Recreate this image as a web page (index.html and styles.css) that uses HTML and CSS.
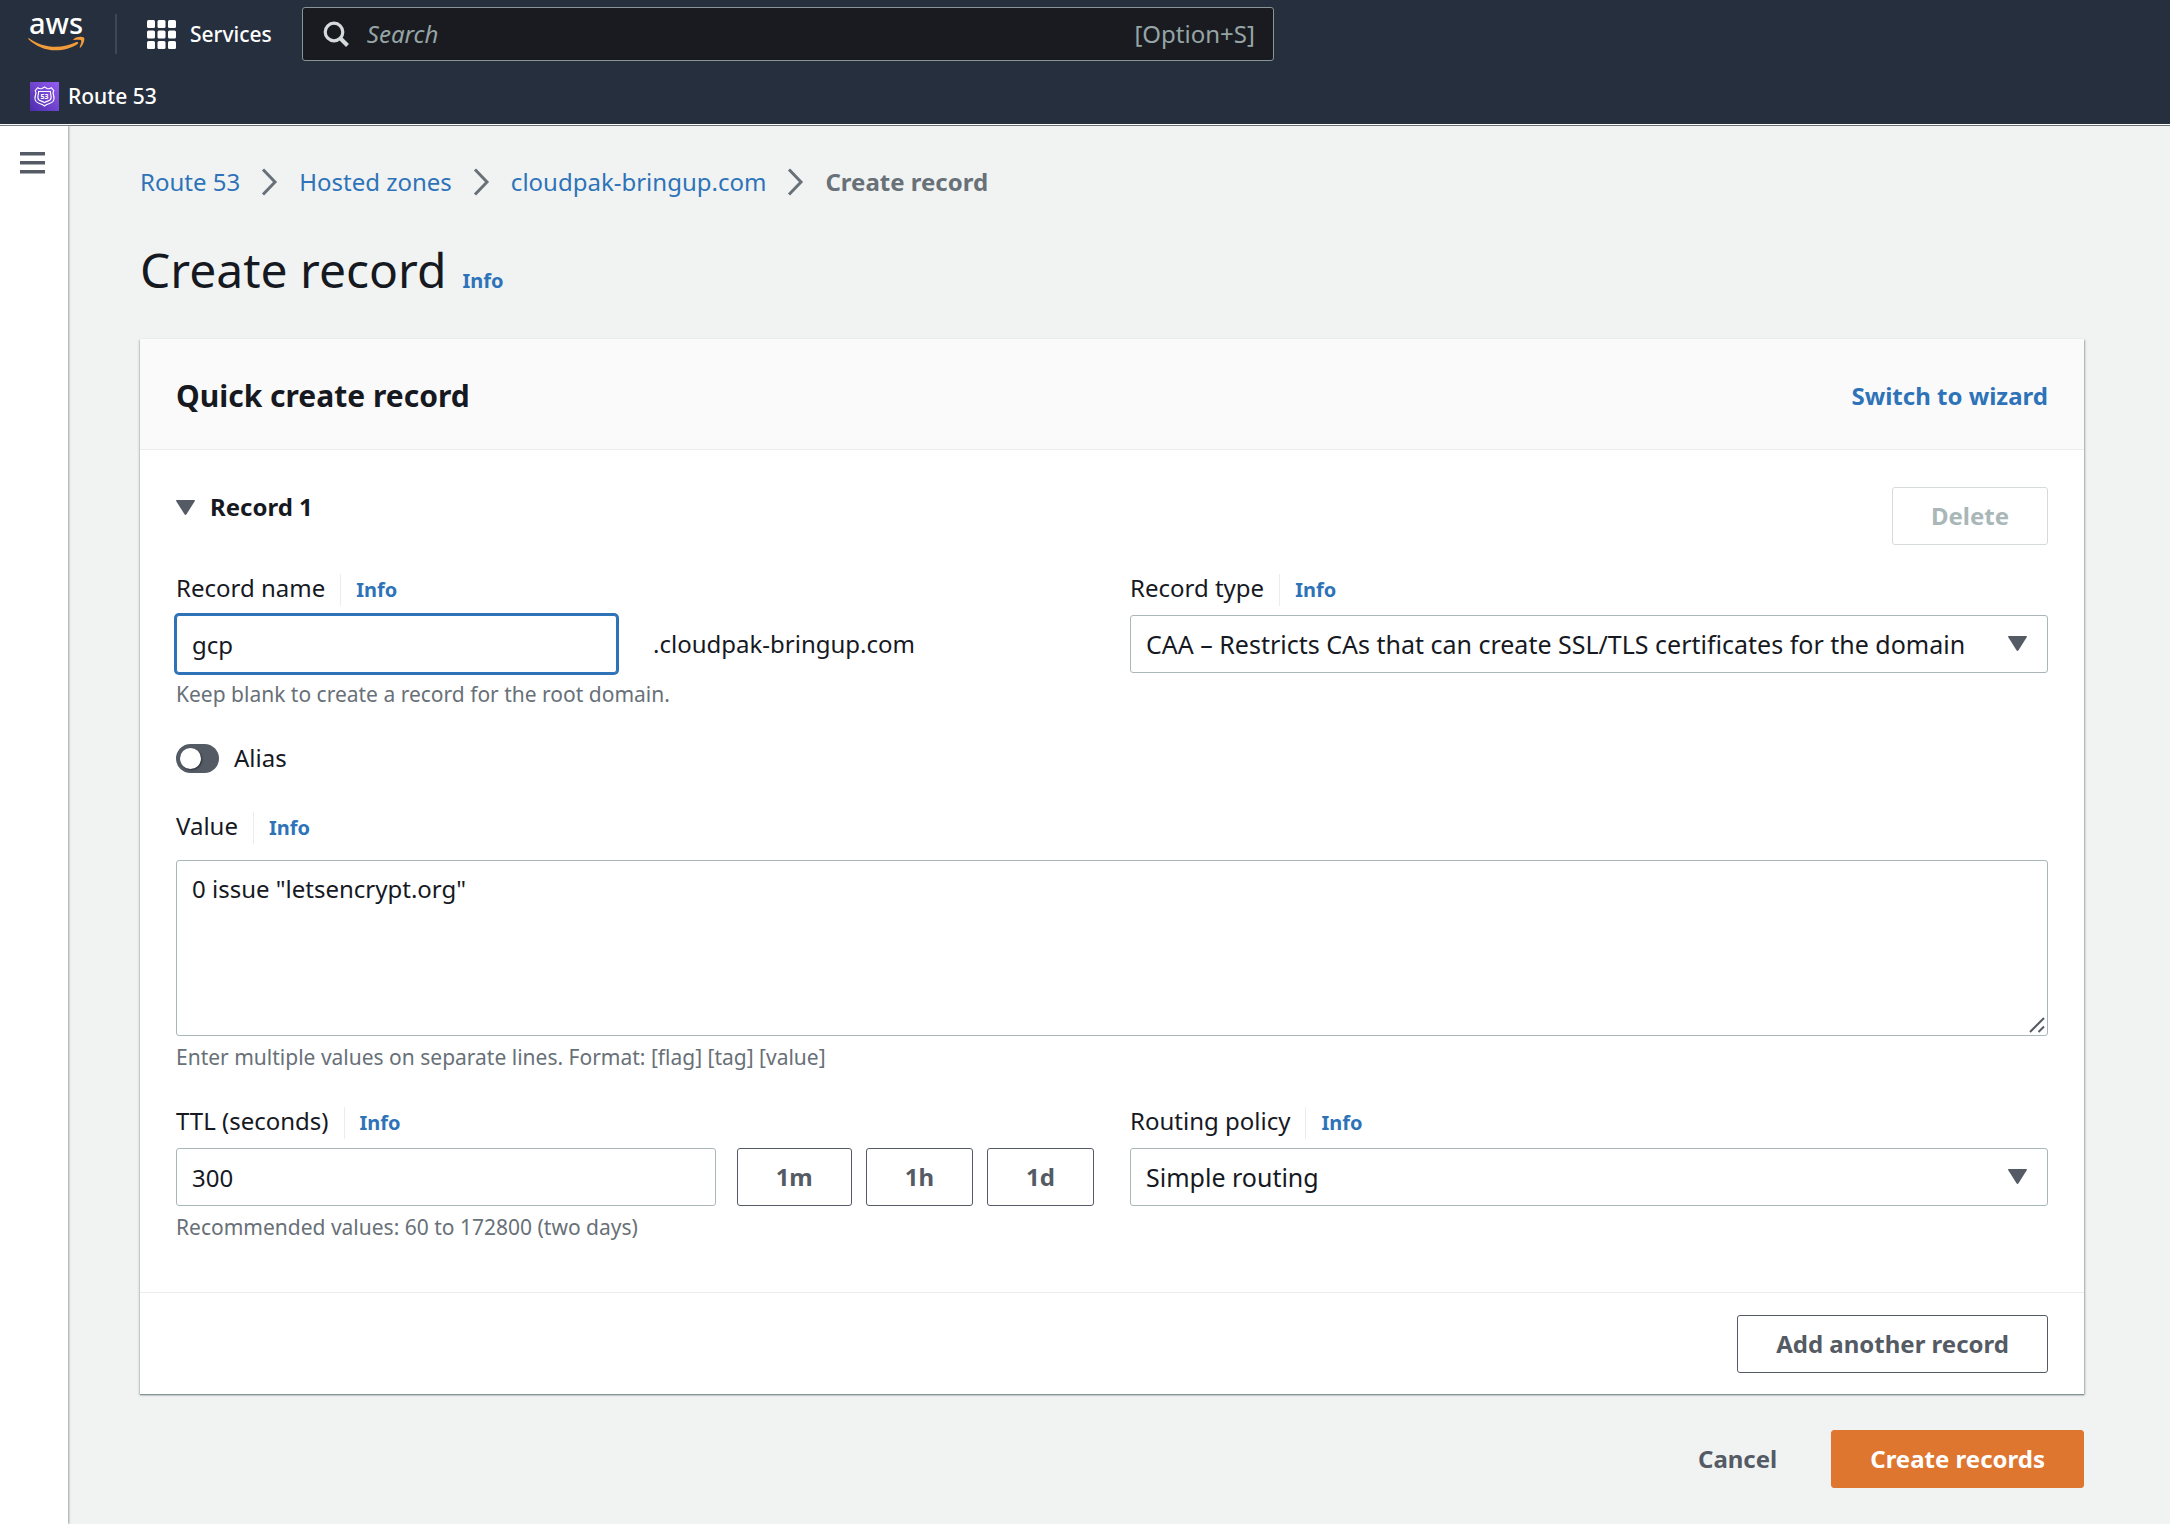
FILE: index.html
```html
<!DOCTYPE html>
<html lang="en">
<head>
<meta charset="utf-8">
<title>Create record - Route 53</title>
<meta name="viewport" content="width=device-width, initial-scale=1">
<link rel="stylesheet" href="styles.css">
</head>
<body>
<header class="topbar">
  <div class="topbar-main">
    <a class="logo" href="#" aria-label="AWS home">
      <svg width="57" height="54" viewBox="0 -8 57 54" aria-hidden="true">
        <text class="logo-text" x="28" y="19" text-anchor="middle">aws</text>
        <path fill="#f29b3a" d="M1 23.200c8 5.600 17 8.600 26.500 8.600 7.500 0 14.500-1.600 21-4.700 1.400-.6 2.300.8 1.100 1.800C43.500 33 35.500 35.300 27.500 35.300 17 35.300 7.500 31 .5 24.200c-.6-.7-.1-1.300.5-1z"/>
        <path fill="#f29b3a" d="M45.600 24.200c2.800-2.400 7.400-2.900 10.200-1.800 1.400.7.1 7.300-3.200 10.100-.6.5-1.100.2-.9-.4.9-2.300 2-5.600 1.400-6.600-.6-1-4.100-.7-6.900-.4-.9.100-1.300-.3-.6-.9z"/>
      </svg>
    </a>
    <span class="separator"></span>
    <button class="services" type="button">
      <svg width="29" height="29" viewBox="0 0 29 29" fill="#fff" aria-hidden="true">
        <rect x="0" y="0" width="8" height="8" rx="1.500"/><rect x="10.500" y="0" width="8" height="8" rx="1.500"/><rect x="21" y="0" width="8" height="8" rx="1.500"/>
        <rect x="0" y="10.500" width="8" height="8" rx="1.500"/><rect x="10.500" y="10.500" width="8" height="8" rx="1.500"/><rect x="21" y="10.500" width="8" height="8" rx="1.500"/>
        <rect x="0" y="21" width="8" height="8" rx="1.500"/><rect x="10.500" y="21" width="8" height="8" rx="1.500"/><rect x="21" y="21" width="8" height="8" rx="1.500"/>
      </svg>
      Services
    </button>
    <div class="search">
      <svg width="26" height="26" viewBox="0 0 26 26" fill="none" stroke="#d5dbdb" stroke-width="3.200" aria-hidden="true">
        <circle cx="11" cy="11" r="8.800"/><path d="M17 17l7.500 7.500" stroke-width="4"/>
      </svg>
      <input class="search-input" type="text" placeholder="Search" aria-label="Search">
      <span class="search-hint">[Option+S]</span>
    </div>
  </div>
  <nav class="favorites" aria-label="Favorites">
    <a class="favorite" href="#">
      <svg width="29" height="29" viewBox="0 0 29 29" aria-hidden="true">
        <defs><linearGradient id="tile" x1="0" y1="1" x2="1" y2="0"><stop offset="0" stop-color="#4d2cab"/><stop offset="1" stop-color="#945df2"/></linearGradient></defs>
        <rect width="29" height="29" fill="url(#tile)"/>
        <g fill="none" stroke="#fff" stroke-width="1.100" stroke-linejoin="round">
          <path d="M14.500 5l2.500 1.500c1.500.5 3 .3 4.200-.8l2.600 2.900c-1 1.500-1 2.700-.3 4.400.9 2.600.9 4.500-.6 6.500-1.500 1.800-4.300 2-6.300 3l-2.100 1.600-2.100-1.600c-2-1-4.800-1.200-6.300-3-1.500-2-1.500-3.900-.6-6.500.7-1.700.7-2.900-.3-4.400l2.600-2.900c1.200 1.100 2.700 1.300 4.200.8z"/>
          <path d="M8.500 9.500h12c-.4 1.500 0 2.500.5 4 .5 2.500 0 4-1.400 4.800-1.700.9-3.500 1-5.100 2.300-1.600-1.300-3.400-1.400-5.100-2.300-1.400-.8-1.900-2.300-1.400-4.800.5-1.500.9-2.500.5-4z"/>
        </g>
        <text class="tile-text" x="14.500" y="17" text-anchor="middle">53</text>
      </svg>
      Route 53
    </a>
  </nav>
</header>

<div class="layout">
  <aside class="sidebar">
    <button class="menu-button" type="button" aria-label="Open navigation">
      <svg width="25" height="24" viewBox="0 0 25 24" fill="#545b64" aria-hidden="true"><rect y="1" width="25" height="3.500"/><rect y="10" width="25" height="3.500"/><rect y="19" width="25" height="3.500"/></svg>
    </button>
  </aside>

  <main class="content">
    <nav class="breadcrumb" aria-label="Breadcrumb">
      <a href="#">Route 53</a>
      <svg class="chevron" viewBox="0 0 17 28" aria-hidden="true"><path d="M2 1.500l12 12.500-12 12.500"/></svg>
      <a href="#">Hosted zones</a>
      <svg class="chevron" viewBox="0 0 17 28" aria-hidden="true"><path d="M2 1.500l12 12.500-12 12.500"/></svg>
      <a href="#">cloudpak-bringup.com</a>
      <svg class="chevron" viewBox="0 0 17 28" aria-hidden="true"><path d="M2 1.500l12 12.500-12 12.500"/></svg>
      <span class="current" aria-current="page">Create record</span>
    </nav>

    <div class="page-title">
      <h1>Create record</h1>
      <a class="info" href="#">Info</a>
    </div>

    <form>
      <section class="card">
        <header class="card-header">
          <h2>Quick create record</h2>
          <a class="switch-link" href="#">Switch to wizard</a>
        </header>

        <div class="card-body">
          <div class="record-header">
            <h3 class="record-title">
              <svg class="caret" viewBox="0 0 19 15" aria-hidden="true"><path d="M1 0h17q1.500 0 .7 1.300l-8.200 13q-1 1.400-2 0l-8.200-13Q-.5 0 1 0z"/></svg>
              Record 1
            </h3>
            <button class="button" type="button" disabled>Delete</button>
          </div>

          <div class="columns">
            <div class="field">
              <div class="field-label"><label for="record-name">Record name</label><a class="info" href="#">Info</a></div>
              <div class="name-row">
                <input class="control focused" id="record-name" type="text" value="gcp">
                <span>.cloudpak-bringup.com</span>
              </div>
              <p class="hint">Keep blank to create a record for the root domain.</p>
            </div>
            <div class="field">
              <div class="field-label"><label for="record-type">Record type</label><a class="info" href="#">Info</a></div>
              <div class="select">
                <select class="control" id="record-type"><option>CAA – Restricts CAs that can create SSL/TLS certificates for the domain</option></select>
                <svg class="caret" viewBox="0 0 19 15" aria-hidden="true"><path d="M1 0h17q1.500 0 .7 1.300l-8.200 13q-1 1.400-2 0l-8.200-13Q-.5 0 1 0z"/></svg>
              </div>
            </div>
          </div>

          <label class="toggle"><input type="checkbox">Alias</label>

          <div class="field value-field">
            <div class="field-label"><label for="value">Value</label><a class="info" href="#">Info</a></div>
            <div class="textarea">
              <textarea class="control" id="value">0 issue "letsencrypt.org"</textarea>
              <svg class="grip" viewBox="0 0 16 16" aria-hidden="true"><path d="M1 15L15 1M9.500 15l5.500-5.500"/></svg>
            </div>
            <p class="hint">Enter multiple values on separate lines. Format: [flag] [tag] [value]</p>
          </div>

          <div class="columns">
            <div class="field">
              <div class="field-label"><label for="ttl">TTL (seconds)</label><a class="info" href="#">Info</a></div>
              <div class="ttl-row">
                <input class="control" id="ttl" type="text" value="300">
                <div class="presets">
                  <button class="button" type="button">1m</button>
                  <button class="button" type="button">1h</button>
                  <button class="button" type="button">1d</button>
                </div>
              </div>
              <p class="hint">Recommended values: 60 to 172800 (two days)</p>
            </div>
            <div class="field">
              <div class="field-label"><label for="routing">Routing policy</label><a class="info" href="#">Info</a></div>
              <div class="select">
                <select class="control" id="routing"><option>Simple routing</option></select>
                <svg class="caret" viewBox="0 0 19 15" aria-hidden="true"><path d="M1 0h17q1.500 0 .7 1.300l-8.200 13q-1 1.400-2 0l-8.200-13Q-.5 0 1 0z"/></svg>
              </div>
            </div>
          </div>
        </div>

        <footer class="card-footer">
          <button class="button" type="button">Add another record</button>
        </footer>
      </section>

      <div class="actions">
        <button class="button plain" type="button">Cancel</button>
        <button class="button primary" type="submit">Create records</button>
      </div>
    </form>
  </main>
</div>
</body>
</html>
```
FILE: styles.css
```css
:root {
  --text: #16191f;
  --muted: #687078;
  --dark-gray: #545b64;
  --link: #2e73b8;
  --control-border: #aab7b8;
  --divider: #eaeded;
}

* { box-sizing: border-box; }

body {
  margin: 0;
  min-height: 100vh;
  display: flex;
  flex-direction: column;
  background: #f1f3f3;
  color: var(--text);
  font: 24px/32px "Noto Sans", "Open Sans", sans-serif;
}

h1, h2, h3, p { margin: 0; }
a { color: var(--link); text-decoration: none; }
svg { display: block; flex: none; }
button, input, select, textarea { font: inherit; color: inherit; }

/* Top navigation */
.topbar {
  background: #262f3e;
  color: #fff;
  border-bottom: 1px solid #fff;
  font-size: 21px;
  font-weight: 500;
}

.topbar-main {
  display: flex;
  align-items: center;
  padding: 7px 28px;
}

.separator {
  width: 2px;
  height: 40px;
  margin: 0 30px;
  background: #414750;
}

.services {
  display: flex;
  align-items: center;
  gap: 14px;
  padding: 0;
  border: 0;
  background: none;
}

.search {
  display: flex;
  align-items: center;
  gap: 18px;
  flex: 0 1 972px;
  height: 54px;
  margin-left: 30px;
  padding: 0 18px 0 20px;
  border: 1px solid #879596;
  border-radius: 3px;
  background: #1a1b20;
  color: #95a5a6;
  font-size: 24px;
  font-weight: 400;
}

.search-input {
  flex: 1;
  min-width: 0;
  padding: 0;
  border: 0;
  outline: 0;
  background: none;
}

.search-input::placeholder { color: #95a5a6; font-style: italic; opacity: 1; }

.logo-text { font-size: 29px; font-weight: 500; fill: #fff; }
.tile-text { font-size: 7px; font-weight: 700; fill: #fff; }

.favorites { display: flex; padding: 12px 30px; }
.favorite { display: flex; align-items: center; gap: 9px; color: #fff; }

/* Page frame */
.layout {
  display: flex;
  flex: 1;
  border-top: 1px solid #687078;
}

.sidebar {
  flex: none;
  width: 68px;
  padding: 24px 0 0 20px;
  background: #fff;
  box-shadow: 1px 0 2px #98a1a3;
}

.menu-button { padding: 0; border: 0; background: none; }

.content {
  flex: 1;
  min-width: 0;
  padding: 40px 86px 36px 72px;
}

.breadcrumb { display: flex; align-items: center; }
.breadcrumb .current { color: var(--muted); font-weight: 700; }

.chevron {
  width: 17px;
  height: 28px;
  margin: 0 21px;
  fill: none;
  stroke: var(--muted);
  stroke-width: 3;
}

.page-title {
  display: flex;
  align-items: baseline;
  gap: 16px;
  margin: 42px 0 39px;
}

h1 { font-size: 48px; font-weight: 400; line-height: 60px; }
.info { font-size: 20px; font-weight: 700; }

/* Card */
.card {
  background: #fff;
  box-shadow: 0 1px 1px #879596, 1px 1px 2px #a5b0b1, -1px 1px 2px #c5cccc;
}

.card-header {
  display: flex;
  align-items: center;
  justify-content: space-between;
  padding: 37px 36px 33px;
  background: #fafafa;
  border-bottom: 1px solid var(--divider);
}

h2 { font-size: 30px; font-weight: 700; line-height: 40px; }
.switch-link { font-weight: 700; }

.card-body { padding: 37px 36px 51px; }

.record-header {
  display: flex;
  align-items: flex-start;
  justify-content: space-between;
  margin-bottom: 27px;
}

.record-title {
  display: flex;
  align-items: center;
  gap: 15px;
  padding-top: 4px;
  font-size: 24px;
}

.caret { width: 19px; height: 15px; fill: var(--dark-gray); }

.columns {
  display: grid;
  grid-template-columns: minmax(0, 1fr) minmax(0, 1fr);
  gap: 36px;
}

/* Fields */
.field-label {
  display: flex;
  align-items: baseline;
  margin-bottom: 9px;
}

.field-label .info {
  margin-left: 15px;
  padding-left: 15px;
  border-left: 1px solid var(--divider);
}

.value-field .field-label { margin-bottom: 16px; }

.control {
  display: block;
  width: 100%;
  height: 58px;
  padding: 0 15px;
  border: 1px solid var(--control-border);
  border-radius: 3px;
  outline: 0;
  background: #fff;
}

.control.focused {
  border-color: var(--link);
  box-shadow: 0 0 0 2px var(--link);
}

.name-row {
  display: grid;
  grid-template-columns: 1fr 1fr;
  align-items: center;
  gap: 36px;
}

.hint {
  margin-top: 7px;
  color: var(--muted);
  font-size: 21px;
  line-height: 28px;
}

.select, .textarea { position: relative; }
.select select { appearance: none; font-size: 25px; }

.select .caret {
  position: absolute;
  top: 21px;
  right: 21px;
  pointer-events: none;
}

.toggle {
  display: flex;
  align-items: center;
  gap: 15px;
  margin: 34px 0 36px;
}

.toggle input {
  appearance: none;
  width: 43px;
  height: 29px;
  margin: 0;
  padding: 4px;
  border-radius: 15px;
  background: var(--dark-gray);
}

.toggle input::before {
  content: "";
  display: block;
  width: 21px;
  height: 21px;
  border-radius: 50%;
  background: #fff;
  box-shadow: 1px 1px 2px #2b3038;
}

.value-field { margin-bottom: 34px; }

.textarea textarea {
  height: 176px;
  padding: 12px 15px;
  resize: none;
}

.grip {
  position: absolute;
  right: 3px;
  bottom: 3px;
  width: 16px;
  height: 16px;
  fill: none;
  stroke: var(--dark-gray);
  stroke-width: 2;
}

.ttl-row { display: flex; gap: 21px; }
.ttl-row .control { flex: 1; min-width: 0; }
.presets { display: flex; gap: 14px; }

/* Buttons */
.button {
  height: 58px;
  padding: 0 38px;
  border: 1px solid var(--dark-gray);
  border-radius: 3px;
  background: #fff;
  color: var(--dark-gray);
  font-weight: 700;
}

.button:disabled { border-color: #d5dbdb; color: var(--control-border); }
.button.plain { border-color: transparent; background: none; }
.button.primary { border-color: #df7630; background: #df7630; color: #fff; }

.card-footer {
  display: flex;
  justify-content: flex-end;
  padding: 22px 36px 21px;
  border-top: 1px solid var(--divider);
}

.actions {
  display: flex;
  justify-content: flex-end;
  gap: 15px;
  margin-top: 36px;
}
```
